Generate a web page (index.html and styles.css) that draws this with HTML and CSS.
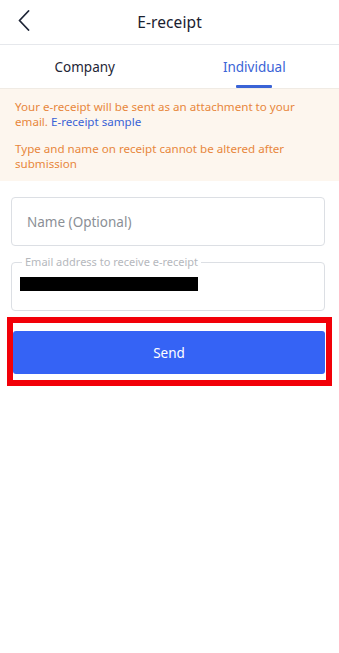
FILE: index.html
```html
<!DOCTYPE html>
<html lang="en">
<head>
<meta charset="utf-8">
<title>E-receipt</title>
<link rel="stylesheet" href="styles.css">
</head>
<body>
<div class="page">
  <header class="topbar">
    <button class="back" aria-label="Back">
      <svg width="12" height="21" viewBox="0 0 12 21"><path d="M10.5 1 L1.5 10.5 L10.5 20" fill="none" stroke="#1e2536" stroke-width="1.8" stroke-linecap="round" stroke-linejoin="round"/></svg>
    </button>
    <h1 class="title">E-receipt</h1>
  </header>
  <nav class="tabs">
    <div class="tab">Company</div>
    <div class="tab active">Individual</div>
  </nav>
  <div class="notice">
    <p>Your e-receipt will be sent as an attachment to your email. <span class="link">E-receipt sample</span></p>
    <p>Type and name on receipt cannot be altered after submission</p>
  </div>
  <form class="form">
    <div class="field">
      <span class="placeholder">Name (Optional)</span>
    </div>
    <fieldset class="field outlined">
      <legend>Email address to receive e-receipt</legend>
      <span class="redact"></span>
    </fieldset>
    <div class="send-wrap">
      <button type="button" class="send">Send</button>
    </div>
  </form>
</div>
</body>
</html>
```
FILE: styles.css
```css
* { box-sizing: border-box; }
html, body { margin: 0; padding: 0; background: #fff; }
body { font-family: "Noto Sans", "Open Sans", sans-serif; color: #1e2536; }
.page { width: 339px; }
.topbar {
  height: 45px;
  display: flex;
  align-items: center;
  justify-content: center;
  position: relative;
  border-bottom: 1px solid #e6e8ec;
}
.back {
  position: absolute;
  left: 18px;
  top: 10px;
  padding: 0;
  border: 0;
  background: none;
  display: flex;
}
.title { margin: 0; font-size: 15.5px; font-weight: 400; color: #1a2130; letter-spacing: 0.1px; }
.tabs { display: flex; height: 43px; }
.tab {
  flex: 1;
  display: flex;
  align-items: center;
  justify-content: center;
  font-size: 13.5px;
  color: #1e2536;
  position: relative;
}
.tab.active { color: #3a63d6; }
.tab.active::after {
  content: "";
  position: absolute;
  left: 50%;
  bottom: 0;
  width: 36px;
  margin-left: -18px;
  height: 3px;
  background: #3a63d6;
  border-radius: 1px;
}
.notice {
  background: #fdf6ee;
  padding: 10px 15px 10px;
  border-top: 1px solid #f0ebe4;
}
.notice p {
  margin: 0;
  font-size: 11.6px;
  line-height: 15px;
  color: #e8873c;
}
.notice p + p { margin-top: 12px; }
.link { color: #3a63d6; }
.form {
  padding: 16px 14px 0 11px;
  display: flex;
  flex-direction: column;
}
.field {
  height: 49px;
  border: 1px solid #dcdfe4;
  border-radius: 4px;
  display: flex;
  align-items: center;
  padding: 0 15px;
  margin: 0;
}
.placeholder { font-size: 13.5px; color: #8b8f96; }
.outlined {
  margin-top: 10px;
  height: 55px;
  padding: 0 8px 6px 8px;
  align-items: flex-start;
  min-width: 0;
}
.outlined legend {
  font-size: 11px;
  color: #b5b8bd;
  padding: 0 3px;
  margin-left: 2px;
  line-height: 12px;
}
.redact {
  display: block;
  width: 178px;
  height: 14px;
  background: #000;
  margin-top: 9px;
}
.send-wrap {
  margin: 6px -7px 0 -4px;
  border: 6px solid #f20008;
  padding: 8px 1px 6px 0;
}
.send {
  display: block;
  width: 100%;
  height: 43px;
  border: 0;
  border-radius: 3px;
  background: #3563f5;
  color: #fff;
  font-family: inherit;
  font-size: 13.5px;
}
```
